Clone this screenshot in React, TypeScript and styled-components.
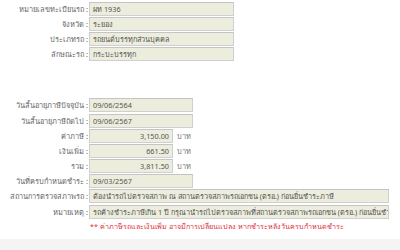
import React from "react";
import styled, { createGlobalStyle } from "styled-components";

const Global = createGlobalStyle`
  html, body { margin: 0; padding: 0; background: #ffffff; }
  body { font-family: Tahoma, "Noto Sans", "DejaVu Sans", sans-serif; font-size: 8px; color: #555; }
`;

const Page = styled.div`
  width: 400px;
  height: 250px;
  overflow: hidden;
  display: flex;
  flex-direction: column;
`;

const Group = styled.div<{ $top: number }>`
  display: flex;
  flex-direction: column;
  padding-top: ${(p) => p.$top}px;
`;

const Row = styled.div`
  display: flex;
  align-items: center;
  height: 15.2px;
`;

const Label = styled.div`
  width: 89px;
  flex: none;
  text-align: right;
  white-space: nowrap;
  color: #666;
  font-size: 7.4px;
  padding-right: 1px;
  box-sizing: border-box;
`;

const Field = styled.div<{ $w: number; $right?: boolean }>`
  width: ${(p) => p.$w}px;
  height: 14px;
  box-sizing: border-box;
  border: 1px solid #cfcfcf;
  border-top-color: #c4c4c4;
  background: #ededde;
  color: #555;
  font-size: 7.3px;
  line-height: 12px;
  padding: 0 3px;
  white-space: nowrap;
  overflow: hidden;
  text-align: ${(p) => (p.$right ? "right" : "left")};
`;

const Unit = styled.span`
  margin-left: 4px;
  font-size: 7.4px;
  color: #777;
`;

const Note = styled.div`
  padding-left: 90px;
  height: 15px;
  line-height: 15px;
  color: #e0303a;
  font-size: 7.2px;
  white-space: nowrap;
`;

const Footer = styled.div`
  margin-top: auto;
  height: 11px;
  background: #f4f4f4;
`;

const top = [
  ["หมายเลขทะเบียนรถ", "ผท 1936"],
  ["จังหวัด", "ระยอง"],
  ["ประเภทรถ", "รถยนต์บรรทุกส่วนบุคคล"],
  ["ลักษณะรถ", "กระบะบรรทุก"],
];

const amounts = [
  ["ค่าภาษี", "3,150.00"],
  ["เงินเพิ่ม", "661.50"],
  ["รวม", "3,811.50"],
];

export default function App() {
  return (
    <Page>
      <Global />
      <Group $top={1}>
        {top.map(([l, v]) => (
          <Row key={l}>
            <Label>{l} :</Label>
            <Field $w={145}>{v}</Field>
          </Row>
        ))}
      </Group>
      <Group $top={36}>
        <Row>
          <Label>วันสิ้นอายุภาษีปัจจุบัน :</Label>
          <Field $w={104}>09/06/2564</Field>
        </Row>
        <Row>
          <Label>วันสิ้นอายุภาษีถัดไป :</Label>
          <Field $w={104}>09/06/2567</Field>
        </Row>
        {amounts.map(([l, v]) => (
          <Row key={l}>
            <Label>{l} :</Label>
            <Field $w={84} $right>{v}</Field>
            <Unit>บาท</Unit>
          </Row>
        ))}
        <Row>
          <Label>วันที่ครบกำหนดชำระ :</Label>
          <Field $w={104}>09/03/2567</Field>
        </Row>
        <Row>
          <Label>สถานการตรวจสภาพรถ :</Label>
          <Field $w={300}>ต้องนำรถไปตรวจสภาพ ณ สถานตรวจสภาพรถเอกชน (ตรอ.) ก่อนยื่นชำระภาษี</Field>
        </Row>
        <Row>
          <Label>หมายเหตุ :</Label>
          <Field $w={300}>รถค้างชำระภาษีเกิน 1 ปี กรุณานำรถไปตรวจสภาพที่สถานตรวจสภาพรถเอกชน (ตรอ.) ก่อนยื่นชำระ</Field>
        </Row>
        <Note>** ค่าภาษีรถและเงินเพิ่ม อาจมีการเปลี่ยนแปลง หากชำระหลังวันครบกำหนดชำระ</Note>
      </Group>
      <Footer />
    </Page>
  );
}
